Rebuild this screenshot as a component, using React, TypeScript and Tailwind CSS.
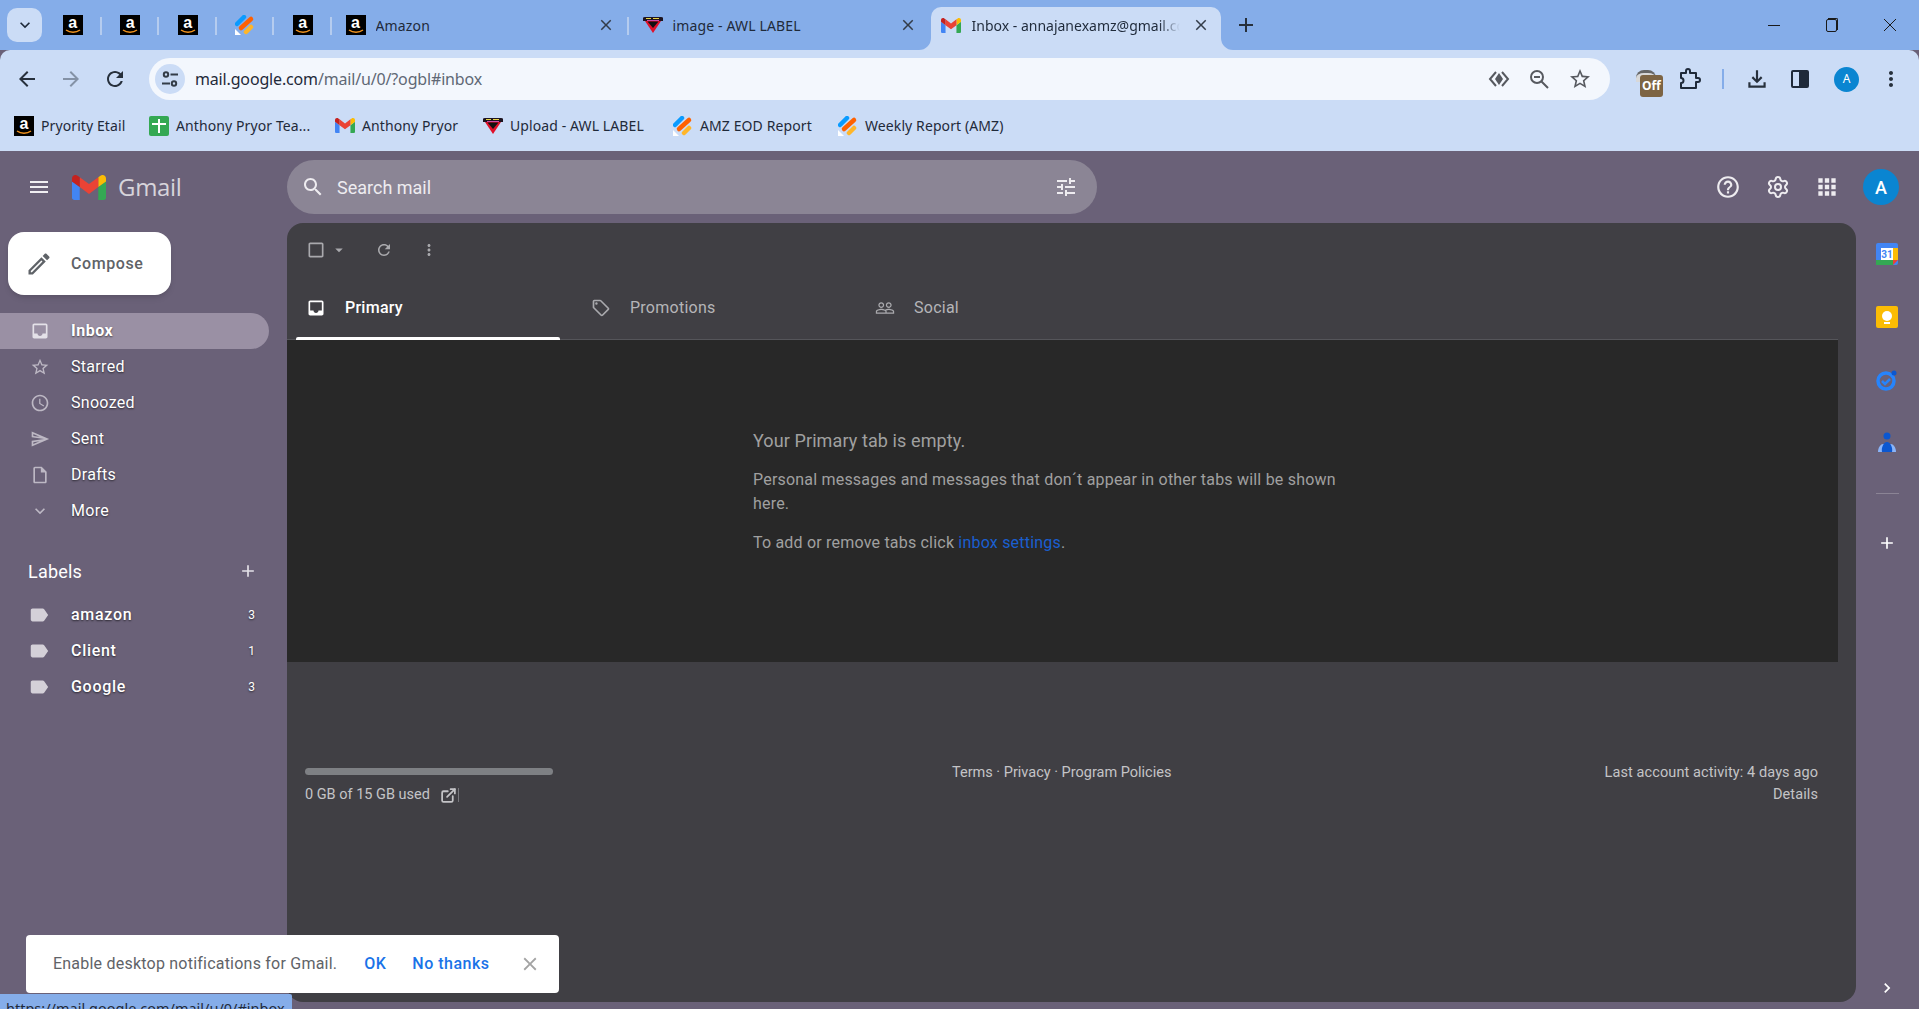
import { ExternalLink, Settings } from "lucide-react";

const P = {
  menu: "M3 18h18v-2H3v2zm0-5h18v-2H3v2zm0-7v2h18V6H3z",
  search: "M15.5 14h-.79l-.28-.27C15.41 12.59 16 11.11 16 9.5 16 5.91 13.09 3 9.5 3S3 5.91 3 9.5 5.91 16 9.5 16c1.61 0 3.09-.59 4.23-1.57l.27.28v.79l5 4.99L20.49 19l-4.99-5zm-6 0C7.01 14 5 11.99 5 9.5S7.01 5 9.5 5 14 7.01 14 9.5 11.99 14 9.5 14z",
  tune: "M3 17v2h6v-2H3zM3 5v2h10V5H3zm10 16v-2h8v-2h-8v-2h-2v6h2zM7 9v2H3v2h4v2h2V9H7zm14 4v-2H11v2h10zm-6-4h2V7h4V5h-4V3h-2v6z",
  help: "M11 18h2v-2h-2v2zm1-16C6.48 2 2 6.48 2 12s4.48 10 10 10 10-4.48 10-10S17.52 2 12 2zm0 18c-4.41 0-8-3.59-8-8s3.59-8 8-8 8 3.59 8 8-3.59 8-8 8zm0-14c-2.21 0-4 1.79-4 4h2c0-1.1.9-2 2-2s2 .9 2 2c0 2-3 1.75-3 5h2c0-2.25 3-2.5 3-5 0-2.21-1.79-4-4-4z",
  apps: "M4 8h4V4H4v4zm6 12h4v-4h-4v4zm-6 0h4v-4H4v4zm0-6h4v-4H4v4zm6 0h4v-4h-4v4zm6-10v4h4V4h-4zm-6 4h4V4h-4v4zm6 6h4v-4h-4v4zm0 6h4v-4h-4v4z",
  inbox: "M19 3H5c-1.1 0-2 .9-2 2v14c0 1.1.9 2 2 2h14c1.1 0 2-.9 2-2V5c0-1.1-.9-2-2-2zm0 12h-4c0 1.66-1.34 3-3 3s-3-1.34-3-3H5V5h14v10z",
  star: "M22 9.24l-7.19-.62L12 2 9.19 8.63 2 9.24l5.46 4.73L5.82 21 12 17.27 18.18 21l-1.63-7.03L22 9.24zM12 15.4l-3.76 2.27 1-4.28-3.32-2.88 4.38-.38L12 6.1l1.71 4.04 4.38.38-3.32 2.88 1 4.28L12 15.4z",
  clock: "M11.99 2C6.47 2 2 6.48 2 12s4.47 10 9.99 10C17.52 22 22 17.52 22 12S17.52 2 11.99 2zM12 20c-4.42 0-8-3.58-8-8s3.58-8 8-8 8 3.58 8 8-3.58 8-8 8zm.5-13H11v6l5.25 3.15.75-1.23-4.5-2.67z",
  send: "M4.01 6.03l7.51 3.22-7.52-1 .01-2.22m7.5 8.72L4 17.97v-2.22l7.51-1M2.01 3L2 10l15 2-15 2 .01 7L23 12 2.01 3z",
  draft: "M14 2H6c-1.1 0-1.99.9-1.99 2L4 20c0 1.1.89 2 1.99 2H18c1.1 0 2-.9 2-2V8l-6-6zm4 18H6V4h7v5h5v11z",
  more: "M16.59 8.59L12 13.17 7.41 8.59 6 10l6 6 6-6z",
  label: "M17.63 5.84C17.27 5.33 16.67 5 16 5L5 5.01C3.9 5.01 3 5.9 3 7v10c0 1.1.9 1.99 2 1.99L16 19c.67 0 1.27-.33 1.63-.84L22 12l-4.37-6.16z",
  add: "M19 13h-6v6h-2v-6H5v-2h6V5h2v6h6v2z",
  edit: "M14.06 9.02l.92.92L5.92 19H5v-.92l9.06-9.06M17.66 3c-.25 0-.51.1-.7.29l-1.83 1.83 3.75 3.75 1.83-1.83c.39-.39.39-1.02 0-1.41l-2.34-2.34c-.2-.2-.45-.29-.71-.29zm-3.6 3.19L3 17.25V21h3.75L17.81 9.94l-3.75-3.75z",
  checkbox: "M19 5v14H5V5h14m0-2H5c-1.1 0-2 .9-2 2v14c0 1.1.9 2 2 2h14c1.1 0 2-.9 2-2V5c0-1.1-.9-2-2-2z",
  refresh: "M17.65 6.35C16.2 4.9 14.21 4 12 4c-4.42 0-7.99 3.58-7.99 8s3.57 8 7.99 8c3.73 0 6.84-2.55 7.73-6h-2.08c-.82 2.33-3.04 4-5.65 4-3.31 0-6-2.69-6-6s2.69-6 6-6c1.66 0 3.14.69 4.22 1.78L13 11h7V4l-2.35 2.35z",
  vert: "M12 8c1.1 0 2-.9 2-2s-.9-2-2-2-2 .9-2 2 .9 2 2 2zm0 2c-1.1 0-2 .9-2 2s.9 2 2 2 2-.9 2-2-.9-2-2-2zm0 6c-1.1 0-2 .9-2 2s.9 2 2 2 2-.9 2-2-.9-2-2-2z",
  tag: "M21.41 11.58l-9-9C12.05 2.22 11.55 2 11 2H4c-1.1 0-2 .9-2 2v7c0 .55.22 1.05.59 1.42l9 9c.36.36.86.58 1.41.58s1.05-.22 1.41-.59l7-7c.37-.36.59-.86.59-1.41s-.23-1.06-.59-1.42zM13 20.01L4 11V4h7v-.01l9 8.99-7 7.02zM6.5 5A1.5 1.5 0 1 0 6.5 8 1.5 1.5 0 1 0 6.5 5z",
  people: "M16.5 13c-1.2 0-3.07.34-4.5 1-1.43-.67-3.3-1-4.5-1C5.33 13 1 14.08 1 16.25V19h22v-2.75c0-2.17-4.33-3.25-6.5-3.25zm-4 4.5h-10v-1.25c0-.54 2.56-1.75 5-1.75s5 1.21 5 1.75v1.25zm9 0H14v-1.25c0-.46-.2-.86-.52-1.22.88-.3 1.96-.53 3.02-.53 2.44 0 5 1.21 5 1.75v1.25zM7.5 12c1.93 0 3.5-1.57 3.5-3.5S9.43 5 7.5 5 4 6.57 4 8.5 5.57 12 7.5 12zm0-5.5c1.1 0 2 .9 2 2s-.9 2-2 2-2-.9-2-2 .9-2 2-2zm9 5.5c1.93 0 3.5-1.57 3.5-3.5S18.43 5 16.5 5 13 6.57 13 8.5s1.57 3.5 3.5 3.5zm0-5.5c1.1 0 2 .9 2 2s-.9 2-2 2-2-.9-2-2 .9-2 2-2z",
  close: "M19 6.41L17.59 5 12 10.59 6.41 5 5 6.41 10.59 12 5 17.59 6.41 19 12 13.41 17.59 19 19 17.59 13.41 12z",
  back: "M20 11H7.83l5.59-5.59L12 4l-8 8 8 8 1.41-1.41L7.83 13H20v-2z",
  forward: "M12 4l-1.41 1.41L16.17 11H4v2h12.17l-5.58 5.59L12 20l8-8z",
  download: "M12 16l-5-5 1.4-1.45 2.6 2.6V4h2v8.15l2.6-2.6L17 11l-5 5zM4 20v-5h2v3h12v-3h2v5H4z",
  chevronRight: "M8.59 16.59L13.17 12 8.59 7.41 10 6l6 6-6 6z",
  caret: "M7 10l5 5 5-5z",
};

const Icon = ({ d, size = 20, className = "" }: { d: string; size?: number; className?: string }) => (
  <svg width={size} height={size} viewBox="0 0 24 24" fill="currentColor" fillRule="evenodd" className={`shrink-0 ${className}`}>
    <path d={d} />
  </svg>
);

const AmazonIcon = () => (
  <div className="relative w-[20px] h-[20px] bg-black shrink-0 flex justify-center">
    <span className="text-white font-bold text-[16px] leading-[16px] font-['Liberation_Sans',sans-serif]">a</span>
    <svg width="16" height="5" viewBox="0 0 16 5" className="absolute bottom-[1px] left-[2px]">
      <path d="M1 1c4 3 10 3 14 0" fill="none" stroke="#f0921e" strokeWidth="1.5" />
    </svg>
  </div>
);

const GmailLogo = ({ w = 20, h = 15 }: { w?: number; h?: number }) => (
  <svg width={w} height={h} viewBox="52 42 88 66" preserveAspectRatio="none" className="shrink-0">
    <path fill="#4285f4" d="M58 108h14V74L52 59v43c0 3.32 2.69 6 6 6" />
    <path fill="#34a853" d="M120 108h14c3.32 0 6-2.69 6-6V59l-20 15" />
    <path fill="#fbbc04" d="M120 48v26l20-15v-8c0-7.42-8.47-11.65-14.4-7.2" />
    <path fill="#ea4335" d="M72 74V48l24 18 24-18v26L96 92" />
    <path fill="#c5221f" d="M52 51v8l20 15V48l-5.6-4.2c-5.94-4.45-14.4-.22-14.4 7.2" />
  </svg>
);

const FormIcon = () => (
  <svg width="20" height="20" viewBox="0 0 20 20" className="shrink-0">
    <path d="M0 14 L6 20 H0z" fill="#fff" />
    <path d="M2 9 L9 2" stroke="#0a9bff" strokeWidth="4.5" strokeLinecap="round" />
    <path d="M6 13 L16 4" stroke="#ff6100" strokeWidth="4.5" strokeLinecap="round" />
    <path d="M11 17 L16 12" stroke="#ffb629" strokeWidth="4.5" strokeLinecap="round" />
  </svg>
);

const AwlIcon = () => (
  <svg width="20" height="20" viewBox="0 0 20 20" className="shrink-0">
    <path d="M0 3 Q0 2 2 2 H18 Q20 2 20 3 V6 H0z" fill="#1d1420" />
    <path d="M3 3.5h5M10 3.5h6" stroke="#e8d44a" strokeWidth="1" />
    <path d="M4 5.5h12" stroke="#d14aa8" strokeWidth="1" />
    <path d="M2 6 H18 L10 18z" fill="#e0102a" />
    <path d="M4.5 6.5 H15.5 L10 13z" fill="#111" />
  </svg>
);

const SheetsPlus = () => (
  <div className="relative w-[20px] h-[20px] rounded-[2px] bg-[#34a853] shrink-0">
    <div className="absolute left-[9px] top-[3px] w-[2px] h-[14px] bg-white" />
    <div className="absolute left-[3px] top-[7px] w-[14px] h-[2px] bg-white" />
  </div>
);

const PinnedTab = ({ icon }: { icon: React.ReactNode }) => (
  <div className="w-[57.5px] h-[50px] flex items-center justify-center relative">
    {icon}
    <div className="absolute right-0 top-[17px] h-[18px] w-[2px] bg-[#b5ccef]" />
  </div>
);

const Tab = ({ icon, title, width, sep }: { icon: React.ReactNode; title: string; width: string; sep?: boolean }) => (
  <div className={`${width} h-[50px] flex items-center pl-[14px] pr-[14px] relative`}>
    {icon}
    <span className="ml-[10px] flex-1 text-[14px] tracking-[0.15px] text-[#1f2a3a] truncate">{title}</span>
    <Icon d={P.close} size={18} className="text-[#333c48]" />
    {sep && <div className="absolute right-0 top-[17px] h-[18px] w-[2px] bg-[#b5ccef]" />}
  </div>
);

const Bookmark = ({ icon, title, width }: { icon: React.ReactNode; title: string; width: string }) => (
  <div className={`${width} flex items-center gap-[7px] shrink-0`}>
    {icon}
    <span className="text-[14px] tracking-[0.1px] text-[#1f2a3a] whitespace-nowrap">{title}</span>
  </div>
);

const BrowserChrome = () => (
  <div className="font-['Noto_Sans',sans-serif] shrink-0">
    <div className="h-[50px] bg-[#85ade9] flex items-start">
      <div className="w-[35px] h-[34px] mt-[8px] ml-[7px] mr-[2px] rounded-[10px] bg-[#cbdcf6] flex items-center justify-center">
        <Icon d={P.more} size={20} className="text-[#1f2a3a]" />
      </div>
      <PinnedTab icon={<AmazonIcon />} />
      <PinnedTab icon={<AmazonIcon />} />
      <PinnedTab icon={<AmazonIcon />} />
      <PinnedTab icon={<FormIcon />} />
      <PinnedTab icon={<AmazonIcon />} />
      <Tab icon={<AmazonIcon />} title="Amazon" width="w-[297px]" sep />
      <Tab icon={<AwlIcon />} title="image - AWL LABEL" width="w-[302px]" />
      <div className="relative w-[290px] h-[43px] mt-[7px] pb-[7px] bg-[#cbdcf6] rounded-t-[10px] flex items-center pl-[10px] pr-[11px]">
        <svg width="12" height="12" className="absolute -left-[12px] bottom-0">
          <path d="M12 0v12H0a12 12 0 0 0 12-12z" fill="#cbdcf6" />
        </svg>
        <svg width="12" height="12" className="absolute -right-[12px] bottom-0">
          <path d="M0 0v12h12A12 12 0 0 1 0 0z" fill="#cbdcf6" />
        </svg>
        <GmailLogo />
        <span className="ml-[11px] w-[208px] text-[14px] text-[#1f2a3a] whitespace-nowrap overflow-hidden [mask-image:linear-gradient(to_right,black_90%,transparent)]">Inbox - annajanexamz@gmail.com</span>
        <Icon d={P.close} size={18} className="ml-auto text-[#333c48]" />
      </div>
      <div className="h-[50px] flex items-center ml-[13px]">
        <Icon d={P.add} size={24} className="text-[#27303c]" />
      </div>
      <div className="ml-auto h-[50px] flex items-center pr-[22px] gap-[46px] text-[#1a1a1a]">
        <div className="w-[12px] h-[1px] bg-[#1a1a1a]" />
        <div className="relative w-[11px] h-[13px] border border-[#1a1a1a] rounded-[2px]">
          <div className="absolute -top-[2px] -right-[2px] w-[10px] h-[12px] border-t border-r border-[#1a1a1a] rounded-tr-[2px]" />
        </div>
        <svg width="14" height="14" viewBox="0 0 14 14">
          <path d="M1 1l12 12M13 1L1 13" stroke="currentColor" strokeWidth="1" />
        </svg>
      </div>
    </div>

    <div className="h-[50px] pt-[8px] bg-[#cbdcf6] rounded-t-[10px] flex items-center text-[#27303c]">
      <div className="w-[149px] flex items-center pl-[15px] gap-[20px]">
        <Icon d={P.back} size={24} />
        <Icon d={P.forward} size={24} className="text-[#8492a6]" />
        <Icon d={P.refresh} size={24} />
      </div>
      <div className="w-[1461px] h-[42px] rounded-full bg-[#f3f7fd] flex items-center pl-[6px] pr-[18px]">
        <div className="w-[30px] h-[30px] rounded-full bg-[#cbdcf6] flex items-center justify-center">
          <svg width="18" height="18" viewBox="0 0 18 18" fill="none" stroke="#333c48" strokeWidth="2">
            <circle cx="5" cy="4.5" r="2.2" />
            <path d="M9.5 4.5H17M1 13.5h8" />
            <circle cx="13" cy="13.5" r="2.2" />
          </svg>
        </div>
        <span className="ml-[10px] text-[16px] tracking-[-0.01em] text-[#1f2a3a]">
          mail.google.com<span className="text-[#5f6875]">/mail/u/0/?ogbl#inbox</span>
        </span>
        <div className="ml-auto flex items-center gap-[18px] text-[#56595f]">
          <svg width="22" height="22" viewBox="0 0 22 22" className="shrink-0">
            <path d="M8 4 2 11l6 7M14 4l6 7-6 7" fill="none" stroke="currentColor" strokeWidth="2" />
            <path d="M11 5 7 11l4 6 4-6z" fill="currentColor" />
          </svg>
          <svg width="22" height="22" viewBox="0 0 22 22" className="shrink-0">
            <circle cx="9" cy="9" r="6" fill="none" stroke="currentColor" strokeWidth="2" />
            <path d="M6 9h6M13.5 13.5 20 20" stroke="currentColor" strokeWidth="2" />
          </svg>
          <Icon d={P.star} size={24} />
        </div>
      </div>
      <div className="flex items-center ml-[26px]">
        <div className="relative w-[26px] h-[26px] mt-[8px]">
          <div className="absolute left-0 top-0 w-[20px] h-[12px] rounded-t-[8px] bg-[#d8d8d8] border-t-[3px] border-[#666]" />
          <div className="absolute left-[4px] top-[5px] w-[23px] h-[22px] rounded-[3px] bg-[#7d6443] text-white text-[12px] font-bold leading-[22px] text-center">Off</div>
        </div>
        <svg width="24" height="24" viewBox="0 0 24 24" className="ml-[15px] shrink-0">
          <path d="M4 6h5V4a2 2 0 0 1 4 0v2h6v5h2a2 2 0 0 1 0 4h-2v6H4v-5a2.5 2.5 0 0 0 0-5z" fill="none" stroke="#1f2a3a" strokeWidth="2" strokeLinejoin="round" />
        </svg>
        <div className="ml-[21px] w-[2px] h-[20px] bg-[#85ade9]" />
        <Icon d={P.download} size={26} className="ml-[20px]" />
        <div className="ml-[21px] w-[18px] h-[18px] rounded-[2px] border-2 border-[#1f2a3a] flex justify-end">
          <div className="w-[8px] bg-[#1f2a3a]" />
        </div>
        <div className="ml-[25px] w-[25px] h-[25px] rounded-full bg-[#0a85d1] text-white text-[12px] flex items-center justify-center">A</div>
        <Icon d={P.vert} size={24} className="ml-[20px]" />
      </div>
    </div>

    <div className="h-[51px] bg-[#cbdcf6] flex items-center pl-[14px]">
      <Bookmark icon={<AmazonIcon />} title="Pryority Etail" width="w-[135px]" />
      <Bookmark icon={<SheetsPlus />} title="Anthony Pryor Tea..." width="w-[186px]" />
      <Bookmark icon={<GmailLogo />} title="Anthony Pryor" width="w-[148px]" />
      <Bookmark icon={<AwlIcon />} title="Upload - AWL LABEL" width="w-[190px]" />
      <Bookmark icon={<FormIcon />} title="AMZ EOD Report" width="w-[165px]" />
      <Bookmark icon={<FormIcon />} title="Weekly Report (AMZ)" width="w-[180px]" />
    </div>
  </div>
);

const navItems = [
  { d: P.inbox, label: "Inbox", active: true },
  { d: P.star, label: "Starred" },
  { d: P.clock, label: "Snoozed" },
  { d: P.send, label: "Sent" },
  { d: P.draft, label: "Drafts" },
  { d: P.more, label: "More" },
];

const labels = [
  { name: "amazon", count: 3 },
  { name: "Client", count: 1 },
  { name: "Google", count: 3 },
];

const Sidebar = () => (
  <aside className="w-[287px] shrink-0 flex flex-col">
    <button className="ml-[8px] mt-[9px] w-[163px] h-[63px] rounded-[16px] bg-white shadow-md flex items-center pl-[17px] text-[#5f6368]">
      <Icon d={P.edit} size={28} />
      <span className="ml-[18px] text-[16px] font-medium tracking-[0.6px]">Compose</span>
    </button>
    <nav className="mt-[18px] w-[269px]">
      {navItems.map((item) => (
        <div
          key={item.label}
          className={`h-[36px] flex items-center pl-[30px] rounded-r-full text-white text-[16px] [text-shadow:0_1px_2px_rgba(0,0,0,0.6)] ${item.active ? "bg-[#9a90a4] font-bold tracking-[0.5px]" : "tracking-[0.3px]"}`}
        >
          <Icon d={item.d} size={20} className={item.active ? "text-[#e4e1e8]" : "text-[#bdb8c4]"} />
          <span className="ml-[21px]">{item.label}</span>
        </div>
      ))}
    </nav>
    <div className="mt-[24px] h-[36px] flex items-center justify-between pl-[28px] pr-[29px] text-white">
      <span className="text-[18px] tracking-[0.2px]">Labels</span>
      <Icon d={P.add} size={20} className="text-[#e4e1e8]" />
    </div>
    <div className="mt-[8px] w-[269px]">
      {labels.map((l) => (
        <div key={l.name} className="h-[36px] flex items-center pl-[28px] pr-[14px] text-white [text-shadow:0_1px_2px_rgba(0,0,0,0.6)]">
          <Icon d={P.label} size={22} className="text-[#d4d0d8]" />
          <span className="ml-[21px] text-[16px] font-medium tracking-[0.7px]">{l.name}</span>
          <span className="ml-auto text-[12px]">{l.count}</span>
        </div>
      ))}
    </div>
  </aside>
);

const tabs = [
  { d: P.inbox, label: "Primary", width: "w-[264px]", pad: "pl-[10px]", active: true },
  { d: P.tag, label: "Promotions", width: "w-[284px]", pad: "pl-[31px]" },
  { d: P.people, label: "Social", width: "w-[264px]", pad: "pl-[31px]" },
];

const MainPanel = () => (
  <main className="flex-1 rounded-[16px] bg-[#403f44] flex flex-col overflow-hidden">
    <div className="h-[53px] flex items-center pl-[19px] text-[#a9a9ad] shrink-0">
      <Icon d={P.checkbox} size={20} />
      <Icon d={P.caret} size={18} className="ml-[4px]" />
      <Icon d={P.refresh} size={18} className="ml-[27px]" />
      <Icon d={P.vert} size={18} className="ml-[27px]" />
    </div>
    <div className="h-[64px] flex pl-[9px] mr-[18px] border-b border-[#55555a] shrink-0">
      {tabs.map((t) => (
        <div
          key={t.label}
          className={`${t.width} ${t.pad} h-[64px] flex items-center relative text-[16px] tracking-[0.25px] ${t.active ? "text-white font-medium" : "text-[#b5b5b8]"}`}
        >
          <Icon d={t.d} size={20} className={t.active ? "text-white" : "text-[#a9a9ad]"} />
          <span className="ml-[10px] pl-[9px]">{t.label}</span>
          {t.active && <div className="absolute left-0 right-0 bottom-0 h-[3px] bg-white rounded-t-[2px]" />}
        </div>
      ))}
    </div>
    <div className="h-[322px] mr-[18px] bg-[#282828] pl-[466px] pt-[90px] text-[#a0a0a0] shrink-0">
      <div className="text-[18px] leading-[22px] tracking-[0.1px]">Your Primary tab is empty.</div>
      <div className="w-[600px] mt-[16px] text-[16px] leading-[24px] tracking-[0.2px]">
        Personal messages and messages that don´t appear in other tabs will be shown here.
      </div>
      <div className="mt-[15px] text-[16px] leading-[24px] tracking-[0.2px]">
        To add or remove tabs click <span className="text-[#1a5fd0]">inbox settings</span>.
      </div>
    </div>
    <div className="flex pl-[18px] pr-[38px] pt-[106px] text-[14.5px] text-[#c4c4c7]">
      <div className="w-[647px]">
        <div className="w-[248px] h-[7px] rounded-full bg-[#7e8084]" />
        <div className="mt-[10px] flex items-center h-[20px]">
          <span>0 GB of 15 GB used</span>
          <ExternalLink size={17} strokeWidth={2.5} className="ml-[10px] text-[#c4c4c7]" />
          <div className="ml-[1px] w-[1px] h-[14px] bg-[#77777c]" />
        </div>
      </div>
      <div className="-mt-[6px] leading-[22px]">Terms · Privacy · Program Policies</div>
      <div className="ml-auto -mt-[6px] text-right leading-[22px] tracking-[0.1px]">
        <div>Last account activity: 4 days ago</div>
        <div>Details</div>
      </div>
    </div>
  </main>
);

const RightRail = () => (
  <aside className="w-[63px] shrink-0 flex flex-col items-center relative pr-[1px]">
    <svg width="22" height="22" viewBox="0 0 22 22" className="mt-[20px]">
      <rect width="22" height="22" rx="2" fill="#4285f4" />
      <rect x="5" y="5" width="12" height="12" fill="#fff" />
      <rect x="17" y="5" width="5" height="12" fill="#fbbc04" />
      <rect y="17" width="17" height="5" fill="#34a853" />
      <path d="M17 17h5l-5 5z" fill="#ea4335" />
      <text x="11" y="15" fontSize="10" fontWeight="700" textAnchor="middle" fill="#4285f4" fontFamily="Roboto">31</text>
    </svg>
    <div className="mt-[41px] w-[22px] h-[22px] rounded-[2px] bg-[#fbbc04] flex flex-col items-center justify-center">
      <div className="w-[10px] h-[10px] rounded-full bg-white" />
      <div className="mt-[1px] w-[6px] h-[2px] bg-white" />
    </div>
    <svg width="22" height="22" viewBox="0 0 22 22" className="mt-[41px]">
      <circle cx="10" cy="12" r="8" fill="none" stroke="#2684fc" strokeWidth="3.5" />
      <path d="M6 12l3 3 5-5" fill="none" stroke="#2684fc" strokeWidth="2.5" />
      <circle cx="18" cy="4" r="2.5" fill="#0b57d0" />
    </svg>
    <svg width="20" height="22" viewBox="0 0 20 22" className="mt-[41px]">
      <path d="M1 20c0-5 3-8 5-8h8c2 0 5 3 5 8z" fill="#8ab4f8" />
      <circle cx="10" cy="4" r="3.5" fill="#0b57d0" />
      <path d="M5 20c-1-5 2-10 5-10s6 5 5 10z" fill="#0b57d0" />
    </svg>
    <div className="mt-[39px] w-[23px] h-[1px] bg-[#8b8495]" />
    <Icon d={P.add} size={20} className="mt-[39px] text-white" />
    <Icon d={P.chevronRight} size={20} className="absolute bottom-[4px] left-[21px] text-white" />
  </aside>
);

export default function App() {
  return (
    <div className="relative h-[1009px] w-full overflow-hidden flex flex-col bg-[#6a6178] font-['Roboto',sans-serif]">
      <BrowserChrome />

      <header className="h-[72px] flex items-center shrink-0 text-white">
        <div className="w-[287px] flex items-center pl-[27px]">
          <Icon d={P.menu} size={24} className="text-[#f0eef2]" />
          <div className="ml-[21px]">
            <GmailLogo w={34} h={25} />
          </div>
          <span className="ml-[12px] text-[24px] text-[#d7d4db] font-['Open_Sans',sans-serif] tracking-[-0.3px]">Gmail</span>
        </div>
        <div className="w-[810px] h-[54px] rounded-full bg-[#8b8595] flex items-center pl-[14px] pr-[19px]">
          <Icon d={P.search} size={24} className="text-[#eeecf0]" />
          <span className="ml-[12px] text-[18px] text-[#eeecf0]">Search mail</span>
          <Icon d={P.tune} size={24} className="ml-auto text-[#eeecf0]" />
        </div>
        <div className="ml-auto flex items-center pr-[20px]">
          <Icon d={P.help} size={26} className="text-[#eeecf0]" />
          <Settings size={24} strokeWidth={2} className="ml-[25px] text-[#eeecf0]" />
          <Icon d={P.apps} size={26} className="ml-[24px] text-[#eeecf0]" />
          <div className="ml-[23px] w-[36px] h-[36px] rounded-full bg-[#0a85d1] flex items-center justify-center text-[18px] font-medium">A</div>
        </div>
      </header>

      <div className="flex-1 flex pb-[7px] min-h-0">
        <Sidebar />
        <MainPanel />
        <RightRail />
      </div>

      {/* notification toast + link status bubble sit over the page */}
      <div className="absolute left-0 bottom-0 w-[292px] h-[15px] bg-[#85ade9] rounded-tr-[2px] pl-[6px] text-[14.5px] leading-[28px] text-[#1f2a3a] font-['Noto_Sans',sans-serif] overflow-hidden whitespace-nowrap">
        https://mail.google.com/mail/u/0/#inbox
      </div>
      <div className="absolute left-[26px] top-[935px] w-[533px] h-[58px] rounded-[4px] bg-white flex items-center pl-[27px] text-[16px] tracking-[0.22px]">
        <span className="text-[#5f6368]">Enable desktop notifications for Gmail.</span>
        <span className="ml-[27px] text-[#1a73e8] font-medium tracking-[0.5px]">OK</span>
        <span className="ml-[26px] text-[#1a73e8] font-medium tracking-[0.5px]">No thanks</span>
        <Icon d={P.close} size={22} className="ml-auto mr-[18px] text-[#a3a3a3]" />
      </div>
    </div>
  );
}
